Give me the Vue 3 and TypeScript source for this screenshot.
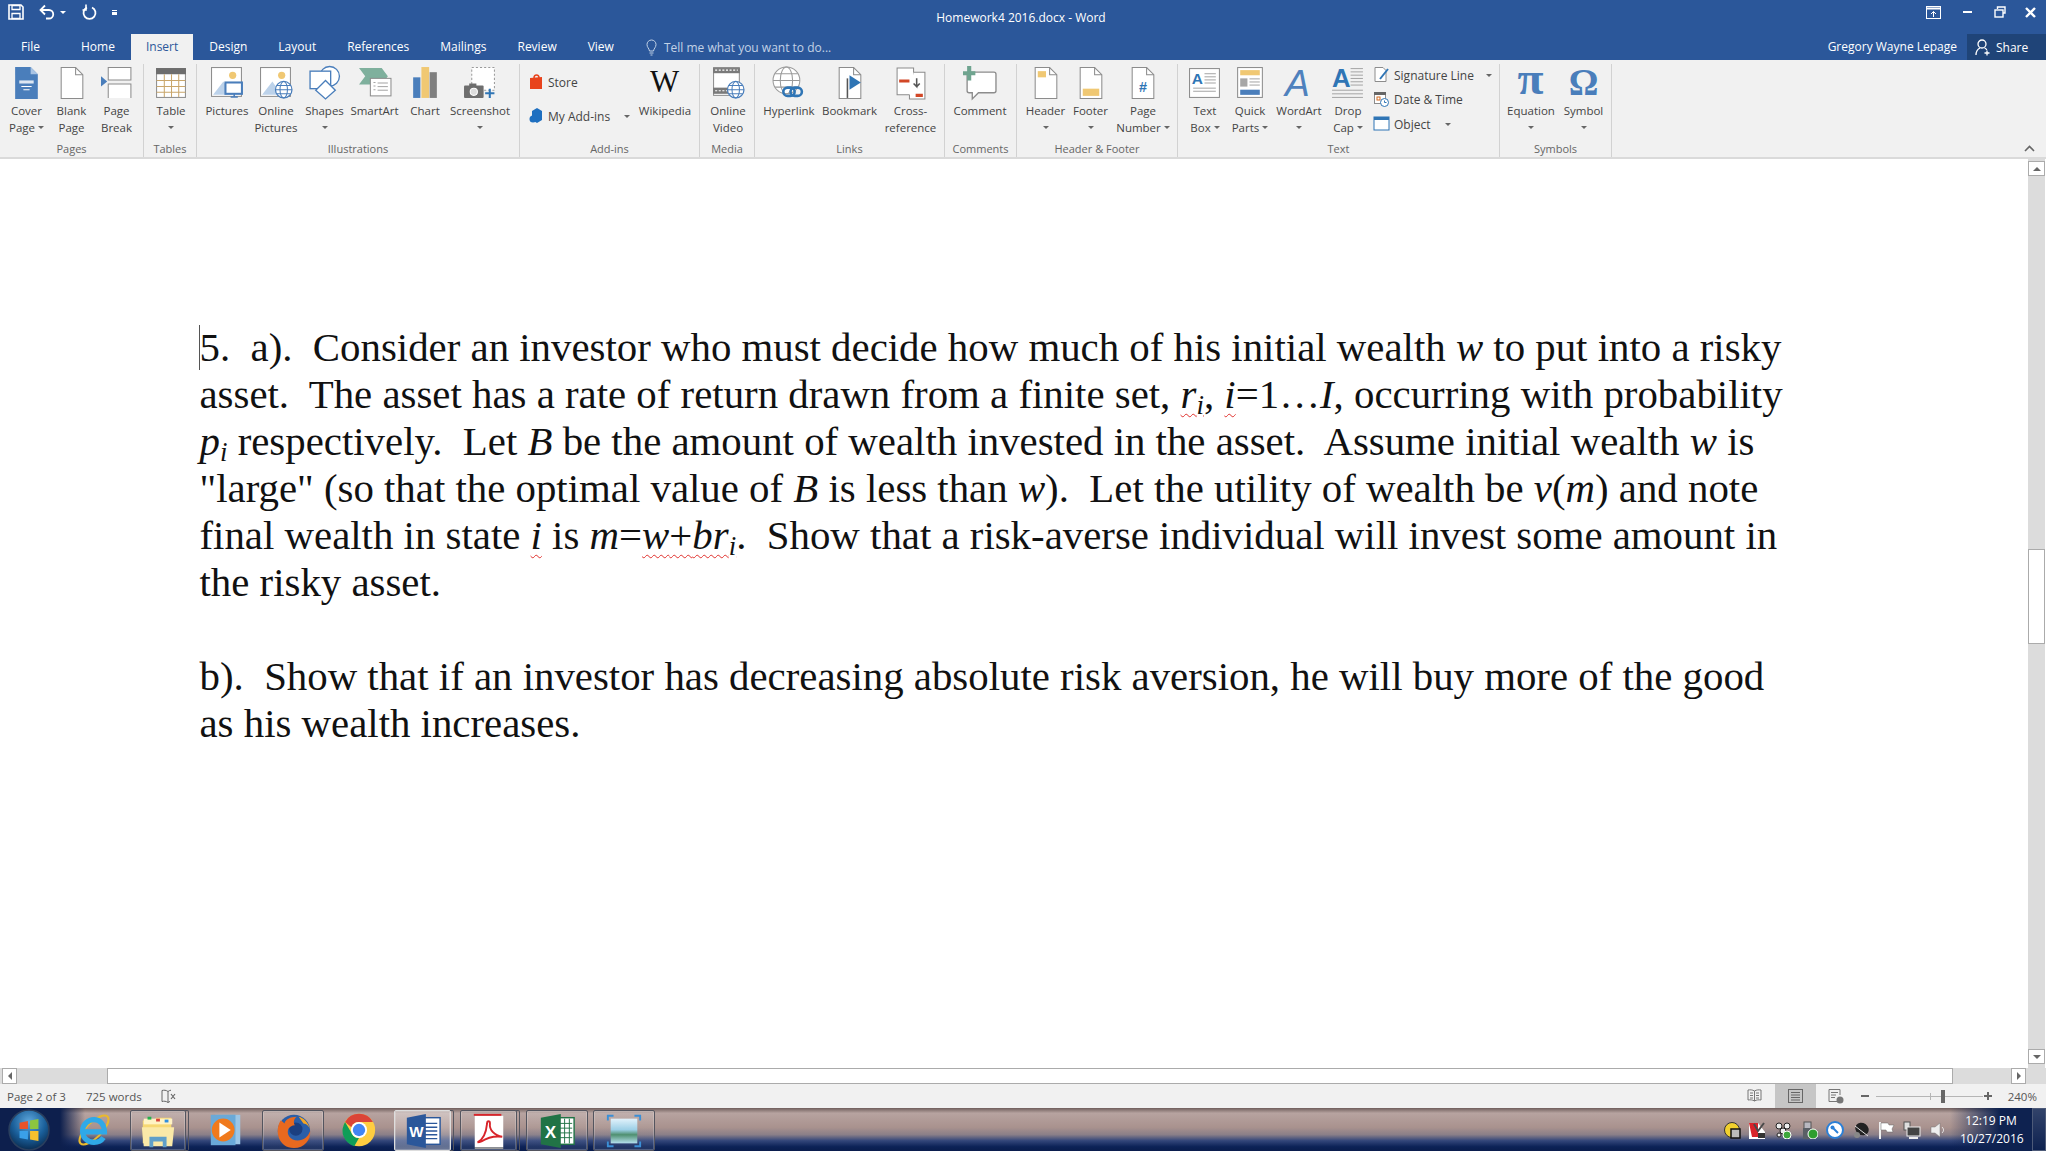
<script setup lang="ts">
type Btn = { icon: string; w: number; lines: string[]; caret?: boolean; size?: number }
type Group = { label: string; w: number; pl: number; items: Btn[]; stack?: string }
type Seg = { t?: string; c?: string; kids?: Seg[] }

const tabs = ['File', 'Home', 'Insert', 'Design', 'Layout', 'References', 'Mailings', 'Review', 'View']

const line = '#8c8c8c'
const blue = '#4a7ebb'
const yellow = '#f0c873'
const globe = (x: number, y: number, r: number) =>
  `<circle cx="${x}" cy="${y}" r="${r}" fill="#fff" stroke="${blue}" stroke-width="1.2"/><ellipse cx="${x}" cy="${y}" rx="${r * 0.45}" ry="${r}" fill="none" stroke="${blue}"/><path d="M${x - r} ${y}h${2 * r}M${x - r * 0.85} ${y - r * 0.5}h${1.7 * r}M${x - r * 0.85} ${y + r * 0.5}h${1.7 * r}" stroke="${blue}" fill="none"/>`
const doc = `<path d="M6 1.5h14l7 7v23H6z" fill="#fff" stroke="${line}"/><path d="M20 1.5v7h7" fill="none" stroke="${line}"/>`
const rows = (x: number, y: number, w: number, n: number, gap = 3) =>
  Array.from({ length: n }, (_, i) => `<path d="M${x} ${y + i * gap + 0.5}h${w}" stroke="#a6a6a6"/>`).join('')

const icons: Record<string, string> = {
  cover: `<path d="M5 1h15l7 7v24H5z" fill="${blue}"/><path d="M20 1v7h7z" fill="#a9c4e4"/><path d="M9 14h14v3H9z" fill="#dce6f2"/><path d="M11 20h10M13 23h6" stroke="#fff"/>`,
  blank: doc,
  pagebreak: `<path d="M8 1.5h22v12H8zM8 31V17.5h22V31" fill="#fff" stroke="${line}"/><path d="M1 10l6 5-6 5z" fill="${blue}"/>`,
  table: `<rect x="2.5" y="2.5" width="28" height="28" fill="#fff" stroke="${line}"/><rect x="2" y="2" width="29" height="6" fill="#6d6d6d"/><path d="M2.5 14h28M2.5 20h28M2.5 25.500h28M10 8v22M17 8v22M24 8v22" stroke="#c9a66b"/>`,
  pictures: `<rect x="1.500" y="1.500" width="29" height="28" fill="#fff" stroke="${line}"/><circle cx="22" cy="9" r="3.500" fill="${yellow}"/><path d="M3 28l10-13 9 13z" fill="#bcd2ea"/><rect x="15" y="16" width="16" height="11" fill="#fff" stroke="${blue}" stroke-width="2"/><path d="M20 30h7M23.500 27v3" stroke="${blue}" stroke-width="1.500"/>`,
  online: `<rect x="1.500" y="1.500" width="29" height="28" fill="#fff" stroke="${line}"/><circle cx="22" cy="9" r="3.500" fill="${yellow}"/><path d="M3 28l10-13 9 13z" fill="#bcd2ea"/>${globe(24, 23, 8)}`,
  shapes: `<circle cx="21" cy="10" r="9.500" fill="#fff" stroke="${blue}" stroke-width="1.300"/><rect x="2" y="5" width="20" height="17" fill="#fff" stroke="${blue}" stroke-width="1.300"/><path d="M17 14l9.500 9.500L17 32l-9.500-8.500z" fill="#fff" stroke="${blue}" stroke-width="1.300"/>`,
  smartart: `<path d="M1 2h22l6 8-6 8H1l6-8z" fill="#7fb09d"/><rect x="12" y="12" width="20" height="17" fill="#fff" stroke="${line}"/>${rows(19, 16, 10, 3, 3.500)}<path d="M15 16h2M15 19.500h2M15 23h2" stroke="#a6a6a6"/>`,
  chart: `<rect x="5" y="11" width="7" height="20" fill="#4a7ebb"/><rect x="13" y="1" width="7.500" height="30" fill="${yellow}"/><rect x="21" y="6" width="7" height="25" fill="#7f7f7f"/>`,
  screenshot: `<rect x="8.500" y="1.500" width="22" height="22" fill="#fff" stroke="#9a9a9a" stroke-dasharray="2 2"/><rect x="1" y="19" width="19" height="12" rx="1" fill="#6e6e6e"/><rect x="6" y="17" width="7" height="3" fill="#6e6e6e"/><circle cx="10.500" cy="25" r="3.500" fill="#ddd" stroke="#fff"/><path d="M26 22v9M21.500 26.500h9" stroke="#2f75b5" stroke-width="2"/>`,
  video: `<rect x="2.500" y="1.500" width="25" height="27" fill="#fff" stroke="${line}"/><rect x="2" y="2" width="26" height="5" fill="#7a7a7a"/><rect x="2" y="21" width="18" height="6" fill="#7a7a7a"/><path d="M4 4h22M4 24h14" stroke="#fff" stroke-dasharray="2 1.500"/>${globe(24, 23, 8)}`,
  hyperlink: `<circle cx="14" cy="14" r="13" fill="#fff" stroke="#9a9a9a"/><ellipse cx="14" cy="14" rx="6" ry="13" fill="none" stroke="#9a9a9a"/><path d="M1 14h26M3 7.500h22M3 20.500h22" stroke="#9a9a9a"/><rect x="11" y="21" width="11" height="8" rx="4" fill="none" stroke="#2f75b5" stroke-width="2.500"/><rect x="18" y="21" width="11" height="8" rx="4" fill="none" stroke="#2f75b5" stroke-width="2.500"/>`,
  bookmark: `${doc}<path d="M14 12v19" stroke="#555" stroke-width="1.500"/><path d="M16 9l11 7-11 7z" fill="#2f75b5"/>`,
  cross: `<path d="M3 2h16v26H3z" fill="#fff" stroke="${line}"/><path d="M19 6h11v26H15v-4" fill="#fff" stroke="${line}"/><path d="M5 13h10v3H5zM21 27h7v3h-7z" fill="#d24726"/><path d="M22 12v8l-3-3m3 3l3-3" fill="none" stroke="#555" stroke-width="1.500"/>`,
  comment: `<path d="M6 6h24a2 2 0 0 1 2 2v16a2 2 0 0 1-2 2H15l-6 6v-6H6a2 2 0 0 1-2-2V8z" fill="#fff" stroke="${line}" stroke-width="1.300"/><path d="M0 7h12M6 0v14" stroke="#6fa48f" stroke-width="4"/>`,
  header: `${doc}<rect x="8.500" y="5" width="8" height="6" fill="${yellow}"/>`,
  footer: `${doc}<rect x="8.500" y="22" width="16" height="7" fill="${yellow}"/>`,
  pagenum: `${doc}<text x="16.500" y="25" text-anchor="middle" class="svgt" font-size="14" font-weight="700" fill="#2f75b5">#</text>`,
  textbox: `<rect x="1.500" y="2.500" width="29" height="28" fill="#fff" stroke="${line}"/><text x="9" y="17" text-anchor="middle" class="svgt" font-size="15" font-weight="700" fill="#2f75b5">A</text>${rows(16, 7, 11, 4)}${rows(5, 21, 22, 2)}`,
  quick: `<rect x="4.500" y="1.500" width="24" height="29" fill="#fff" stroke="${line}"/><rect x="7" y="4" width="19" height="5" fill="${yellow}"/><rect x="7" y="12" width="7" height="8" fill="#a6a6a6"/>${rows(16, 12, 10, 3)}<rect x="7" y="23" width="19" height="5" fill="${blue}"/>`,
  wordart: `<text x="15" y="29" text-anchor="middle" class="svgt" font-size="36" font-style="italic" fill="#4f81bd">A</text>`,
  dropcap: `<text x="10" y="20" text-anchor="middle" class="svgt" font-size="25" font-weight="700" fill="#2f75b5">A</text>${rows(19, 2, 12, 6, 3.200)}${rows(1, 23, 30, 3, 3.500)}`,
  pi: `<text x="16" y="27" text-anchor="middle" class="svgs" font-size="46" font-weight="700" fill="#4a7ebb">π</text>`,
  omega: `<text x="16" y="28" text-anchor="middle" class="svgs" font-size="36" font-weight="700" fill="#4a7ebb">Ω</text>`,
  wiki: `<text x="16" y="25" text-anchor="middle" class="svgs" font-size="30" fill="#111">W</text>`,
  store: `<path d="M2 5l12-1v12H2z" fill="#e8431c"/><path d="M6 5c0-4 5-4 5 0" fill="none" stroke="#e8431c" stroke-width="1.500"/>`,
  addin: `<path d="M8 1l5 3v9l-5 3-5-3V4z" fill="#1e6fc0"/><circle cx="4" cy="12" r="3.500" fill="#1e6fc0"/>`,
  signature: `<path d="M2 1.500h8l3 3v11H2z" fill="#fff" stroke="${line}"/><path d="M7 13l8-10" stroke="#2f75b5" stroke-width="2"/>`,
  datetime: `<rect x="1.500" y="1.500" width="11" height="11" fill="#fff" stroke="${line}"/><rect x="1" y="1" width="12" height="3" fill="#666"/><rect x="4" y="6" width="3" height="3" fill="none" stroke="#d2691e"/><circle cx="11.500" cy="11.500" r="4" fill="#fff" stroke="#2f75b5"/><path d="M11.500 9.500v2h2" stroke="#2f75b5" fill="none"/>`,
  object: `<rect x="1" y="2" width="15" height="13" fill="#fff" stroke="#2f75b5"/><rect x="1" y="2" width="15" height="3" fill="#2f75b5"/>`
}

const groups: Group[] = [
  { label: 'Pages', w: 144, pl: 4, items: [
    { icon: 'cover', w: 45, lines: ['Cover', 'Page'], caret: true },
    { icon: 'blank', w: 45, lines: ['Blank', 'Page'] },
    { icon: 'pagebreak', w: 45, lines: ['Page', 'Break'] }
  ] },
  { label: 'Tables', w: 53, pl: 2, items: [{ icon: 'table', w: 50, lines: ['Table', ''], caret: true }] },
  { label: 'Illustrations', w: 323, pl: 5, items: [
    { icon: 'pictures', w: 50, lines: ['Pictures'] },
    { icon: 'online', w: 48, lines: ['Online', 'Pictures'] },
    { icon: 'shapes', w: 49, lines: ['Shapes', ''], caret: true },
    { icon: 'smartart', w: 51, lines: ['SmartArt'] },
    { icon: 'chart', w: 50, lines: ['Chart'] },
    { icon: 'screenshot', w: 60, lines: ['Screenshot', ''], caret: true }
  ] },
  { label: 'Add-ins', w: 180, pl: 115, stack: 'addins', items: [
    { icon: 'wiki', w: 60, lines: ['Wikipedia'] }
  ] },
  { label: 'Media', w: 55, pl: 3, items: [{ icon: 'video', w: 50, lines: ['Online', 'Video'] }] },
  { label: 'Links', w: 190, pl: 4, items: [
    { icon: 'hyperlink', w: 60, lines: ['Hyperlink'] },
    { icon: 'bookmark', w: 61, lines: ['Bookmark'] },
    { icon: 'cross', w: 61, lines: ['Cross-', 'reference'] }
  ] },
  { label: 'Comments', w: 72, pl: 5, items: [{ icon: 'comment', w: 60, lines: ['Comment'] }] },
  { label: 'Header & Footer', w: 161, pl: 6, items: [
    { icon: 'header', w: 45, lines: ['Header', ''], caret: true },
    { icon: 'footer', w: 45, lines: ['Footer', ''], caret: true },
    { icon: 'pagenum', w: 60, lines: ['Page', 'Number'], caret: true }
  ] },
  { label: 'Text', w: 322, pl: 4, stack: 'text', items: [
    { icon: 'textbox', w: 46, lines: ['Text', 'Box'], caret: true },
    { icon: 'quick', w: 44, lines: ['Quick', 'Parts'], caret: true },
    { icon: 'wordart', w: 54, lines: ['WordArt', ''], caret: true },
    { icon: 'dropcap', w: 44, lines: ['Drop', 'Cap'], caret: true }
  ] },
  { label: 'Symbols', w: 112, pl: 5, items: [
    { icon: 'pi', w: 52, lines: ['Equation', ''], caret: true },
    { icon: 'omega', w: 53, lines: ['Symbol', ''], caret: true }
  ] }
]

const textStack = [
  { icon: 'signature', text: 'Signature Line', arrow: 9 },
  { icon: 'datetime', text: 'Date & Time', arrow: 0 },
  { icon: 'object', text: 'Object', arrow: 12 }
]

const it = (t: string): Seg => ({ t, c: 'it' })
const sub = (t: string): Seg => ({ t, c: 'it sub' })
const txt = (t: string): Seg => ({ t })

const page: Seg[][] = [
  [txt('5.  a).  Consider an investor who must decide how much of his initial wealth '), it('w'), txt(' to put into a risky')],
  [txt('asset.  The asset has a rate of return drawn from a finite set, '), { c: 'err', kids: [it('r'), sub('i')] }, txt(', '), { c: 'err', kids: [it('i')] }, txt('=1…'), it('I'), txt(', occurring with probability')],
  [it('p'), sub('i'), txt(' respectively.  Let '), it('B'), txt(' be the amount of wealth invested in the asset.  Assume initial wealth '), it('w'), txt(' is')],
  [txt('"large" (so that the optimal value of '), it('B'), txt(' is less than '), it('w'), txt(').  Let the utility of wealth be '), it('v'), txt('('), it('m'), txt(') and note')],
  [txt('final wealth in state '), { c: 'err', kids: [it('i')] }, txt(' is '), it('m'), txt('='), { c: 'err', kids: [it('w'), txt('+'), it('br'), sub('i')] }, txt('.  Show that a risk-averse individual will invest some amount in')],
  [txt('the risky asset.')],
  [txt(' ')],
  [txt('b).  Show that if an investor has decreasing absolute risk aversion, he will buy more of the good')],
  [txt('as his wealth increases.')]
]

const task: Record<string, string> = {
  orb: `<defs><radialGradient id="orbg" cx="50%" cy="30%" r="75%"><stop offset="0" stop-color="#5fa8dc"/><stop offset="0.55" stop-color="#1a5f9a"/><stop offset="1" stop-color="#072446"/></radialGradient></defs><circle cx="20" cy="20" r="19" fill="url(#orbg)" stroke="#2a3f5e" stroke-width="1.500"/><path d="M11 13l8-1.500v7.500h-8z" fill="#e8532b"/><path d="M21 11l8-1.500v9.500h-8z" fill="#8cc63f"/><path d="M11 21h8v8l-8-1.500z" fill="#3aa0e8"/><path d="M21 21h8v9.500l-8-1.500z" fill="#f6c12c"/>`,
  ie: `<ellipse cx="20" cy="20" rx="20" ry="8" transform="rotate(-45 20 20)" fill="none" stroke="#eab92c" stroke-width="2.200"/><path d="M8 22h23c0-8-5-13-11-13S8 14 8 21s5 12 12 12c4 0 8-2 10-5" fill="none" stroke="#2fa9e8" stroke-width="5.500"/>`,
  explorer: `<path d="M4 9h12l2-3h16v27H4z" fill="#f7d873"/><path d="M5 7h30v6H5z" fill="#fff3c4"/><rect x="9" y="5" width="4" height="3" fill="#26b14c"/><rect x="18" y="7" width="4" height="3" fill="#d8433a"/><rect x="27" y="8" width="4" height="3" fill="#2f8fe0"/><path d="M3 16h34l-2 20H5z" fill="#fae9a8"/><path d="M11 37V26h18v11h-4v-6H15v6z" fill="#5f9fc9"/>`,
  media: `<rect x="9" y="4" width="26" height="31" fill="#9cc6e6"/><rect x="4" y="4" width="26" height="32" fill="#6aa9d8"/><circle cx="17" cy="20" r="12" fill="#f07a1d"/><path d="M13 12l12 8-12 8z" fill="#fff"/>`,
  firefox: `<circle cx="21" cy="20" r="17" fill="#2a5ea8"/><circle cx="23" cy="18" r="7" fill="#1b3f80"/><path d="M7 9C0 20 5 38 21 38c11 0 18-9 17-18-2 6-7 10-13 10-8 0-12-6-10-12 1-2 4-4 7-4-2-3-1-7 2-9-7 0-12 3-13 7-1-1-2-2-4-3z" fill="#e8691f"/><path d="M26 5c5 1 10 6 12 13-1-3-4-6-7-6z" fill="#f6a623"/>`,
  chrome: `<circle cx="20" cy="20" r="17" fill="#ffcd40"/><path d="M20 3a17 17 0 0 1 14.700 8.500H20a8.500 8.500 0 0 0-8 5.500L5.300 11.500A17 17 0 0 1 20 3z" fill="#db4437"/><path d="M5.300 11.500L12 23a8.500 8.500 0 0 0 8 5.500L15 37A17 17 0 0 1 5.300 11.500z" fill="#0f9d58"/><circle cx="20" cy="20" r="8.500" fill="#fff"/><circle cx="20" cy="20" r="6.500" fill="#4285f4"/>`,
  word: `<rect x="17" y="6" width="21" height="28" fill="#fff" stroke="#2b579a" stroke-width="1.500"/><path d="M22 12h13M22 16h13M22 20h13M22 24h13M22 28h13" stroke="#2b579a" stroke-width="1.500"/><path d="M3 6l20-4v36L3 34z" fill="#2b579a"/><text x="13" y="26" text-anchor="middle" class="svgt" font-size="16" font-weight="700" fill="#fff">W</text>`,
  acrobat: `<rect x="5" y="4" width="30" height="33" fill="#fff"/><rect x="5" y="37" width="30" height="2" fill="#9a9a9a"/><rect x="4" y="2" width="29" height="2" fill="#d8242a"/><path d="M8 32c6-3 9-10 10-20 0-3 3-3 3 0-1 7 5 13 13 14-8-1-16 1-22 5-2 1-4 1-4 1z" fill="none" stroke="#d8242a" stroke-width="2"/>`,
  excel: `<rect x="18" y="6" width="20" height="28" fill="#fff" stroke="#217346" stroke-width="1.500"/><path d="M22 12h14M22 17h14M22 22h14M22 27h14M28 7v26M33 7v26" stroke="#217346"/><path d="M3 6l21-4v36L3 34z" fill="#217346"/><text x="13" y="27" text-anchor="middle" class="svgt" font-size="18" font-weight="700" fill="#fff">X</text>`,
  photo: `<defs><linearGradient id="ph" x1="0" y1="0" x2="0" y2="1"><stop offset="0" stop-color="#e2f2fb"/><stop offset="0.45" stop-color="#9ccfe6"/><stop offset="0.65" stop-color="#4f9070"/><stop offset="1" stop-color="#b5e0ef"/></linearGradient></defs><rect x="6" y="7" width="28" height="26" fill="url(#ph)"/><path d="M2 9V3h7v2H4v4zM38 9V3h-7v2h5v4zM2 31v6h7v-2H4v-4zM38 31v6h-7v-2h5v-4z" fill="#3b8fd6"/>`
}

const taskItems = [
  { icon: 'ie', w: 72, m: 0, btn: false },
  { icon: 'explorer', w: 56, m: 0, btn: true, sliver: true },
  { icon: 'media', w: 72, m: 0, btn: false },
  { icon: 'firefox', w: 62, m: 0, btn: true },
  { icon: 'chrome', w: 70, m: 0, btn: false },
  { icon: 'word', w: 57, m: 0, btn: true, sliver: true, active: true },
  { icon: 'acrobat', w: 57, m: 5, btn: true, sliver: true },
  { icon: 'excel', w: 62, m: 5, btn: true },
  { icon: 'photo', w: 62, m: 5, btn: true }
]

const tray: Record<string, string> = {
  a: `<circle cx="9" cy="9" r="7.500" fill="#f2d02e" stroke="#333"/><rect x="8" y="8" width="9" height="9" fill="#bbb" stroke="#111" stroke-width="1.500"/>`,
  b: `<path d="M1 2h9l7 9v7H1z" fill="#fff"/><path d="M1 2h9v14H4z" fill="#d8242a"/><path d="M6 3l4 7 6-8" stroke="#4a4a4a" stroke-width="2" fill="none"/><rect x="10" y="12" width="7" height="5" fill="#333"/>`,
  c: `<circle cx="5" cy="5" r="3" fill="#eee" stroke="#222"/><circle cx="13" cy="5" r="3" fill="#eee" stroke="#222"/><circle cx="9" cy="10" r="3" fill="#eee" stroke="#222"/><circle cx="5" cy="14" r="2" fill="#eee" stroke="#222"/><circle cx="13" cy="14" r="4" fill="#3da83c" stroke="#fff"/>`,
  d: `<rect x="4" y="1" width="7" height="7" fill="#b8b8c0" stroke="#555"/><rect x="3" y="7" width="9" height="11" fill="#5a5f66"/><circle cx="13" cy="13" r="5" fill="#2f9e2f" stroke="#fff"/>`,
  e: `<circle cx="9" cy="9" r="8" fill="#fff" stroke="#2a7fd6" stroke-width="2"/><path d="M6 6l6 6" stroke="#2a7fd6" stroke-width="2"/><circle cx="6.500" cy="6.500" r="2" fill="#2a7fd6"/>`,
  f: `<ellipse cx="10" cy="8" rx="7" ry="6" transform="rotate(35 10 8)" fill="#222"/><path d="M3 5l13 10" stroke="#ddd"/><circle cx="5" cy="14" r="3" fill="#888"/>`,
  g: `<path d="M3 1v17" stroke="#eee" stroke-width="2"/><path d="M4 2h7l1 2h5l-2 4 1 3h-6l-1-2H4z" fill="#fff" stroke="#666" stroke-width="0.500"/>`,
  h: `<rect x="1" y="1" width="6" height="8" fill="#ddd" stroke="#555"/><rect x="4" y="6" width="13" height="9" fill="#444" stroke="#eee"/><path d="M6 17h9" stroke="#eee" stroke-width="2"/>`,
  i: `<path d="M2 6h4l5-4v14l-5-4H2z" fill="#eee" stroke="#777" stroke-width="0.500"/><path d="M13 6c2 2 2 4 0 6" stroke="#eee" fill="none"/>`
}
</script>

<template>
  <div class="word">
    <header class="top">
      <div class="titlerow">
        <div class="qat">
          <svg class="qsave" width="16" height="16" viewBox="0 0 16 16"><path d="M1 1h12l2 2v12H1z" fill="none" stroke="#fff" stroke-width="1.600"/><path d="M4 1.500h8v4H4zM4 9.500h8v5H4z" fill="none" stroke="#fff" stroke-width="1.300"/></svg>
          <svg class="qundo" width="16" height="16" viewBox="0 0 16 16"><path d="M2 6h8a4.200 4.200 0 0 1 0 8.500H7" fill="none" stroke="#fff" stroke-width="1.800"/><path d="M6 1.500L1.500 6 6 10.500" fill="none" stroke="#fff" stroke-width="1.800"/></svg>
          <span class="qcaret"></span>
          <svg class="qredo" width="15" height="16" viewBox="0 0 15 16"><path d="M5 3.500a6 6 0 1 0 5 0" fill="none" stroke="#fff" stroke-width="1.800"/><path d="M4 0.500v5.500h-3.500" fill="none" stroke="#fff" stroke-width="1.600"/></svg>
          <span class="qmore"></span>
        </div>
        <div class="title">Homework4 2016.docx - Word</div>
        <div class="win">
          <svg width="15" height="13" viewBox="0 0 15 13"><rect x="0.500" y="0.500" width="14" height="12" fill="none" stroke="#fff"/><path d="M1 2.500h13" stroke="#fff" stroke-width="2"/><path d="M7.500 11V5.500M5 8l2.500-2.500L10 8" fill="none" stroke="#fff"/></svg>
          <span class="wmin"></span>
          <svg width="12" height="12" viewBox="0 0 12 12"><path d="M3.500 3V1h7.500v6H9" fill="none" stroke="#fff" stroke-width="1.400"/><rect x="1" y="4" width="8" height="7" fill="none" stroke="#fff" stroke-width="1.400"/></svg>
          <svg width="11" height="11" viewBox="0 0 11 11"><path d="M1 1l9 9M10 1l-9 9" stroke="#fff" stroke-width="2.400"/></svg>
        </div>
      </div>
      <div class="tabrow">
        <nav class="tabs">
          <span v-for="t in tabs" :key="t" class="tab" :class="{ on: t === 'Insert', file: t === 'File' }">{{ t }}</span>
        </nav>
        <div class="tell">
          <svg width="11" height="17" viewBox="0 0 11 17"><path d="M3.500 12C3 9 1 8.500 1 5.500a4.500 4.500 0 0 1 9 0C10 8.500 8 9 7.500 12z" fill="none" stroke="#c2d2e6"/><path d="M3.500 14h4M4.500 16h2" stroke="#c2d2e6"/></svg>
          <span>Tell me what you want to do...</span>
        </div>
        <div class="user">Gregory Wayne Lepage</div>
        <div class="share">
          <svg width="16" height="17" viewBox="0 0 16 17"><circle cx="7" cy="5" r="4" fill="none" stroke="#fff" stroke-width="1.300"/><path d="M1 16c0-4 2-6 4-7M9.500 9c1 .3 1.800 1 2.300 2" fill="none" stroke="#fff" stroke-width="1.300"/><path d="M12 11.500v5M9.500 14h5" stroke="#fff" stroke-width="1.300"/></svg>
          <span>Share</span>
        </div>
      </div>
    </header>

    <section class="ribbon">
      <div v-for="g in groups" :key="g.label" class="group" :style="{ width: g.w + 'px' }">
        <div class="gitems" :style="{ paddingLeft: g.pl + 'px' }">
          <div v-if="g.stack === 'addins'" class="addins">
            <div class="mini"><svg width="18" height="18" viewBox="0 0 18 18" v-html="icons.store"></svg><span>Store</span></div>
            <div class="mini"><svg width="18" height="18" viewBox="0 0 16 18" v-html="icons.addin"></svg><span>My Add-ins</span><i class="caret ar"></i></div>
          </div>
          <div v-for="b in g.items" :key="b.icon" class="btn" :style="{ width: b.w + 'px' }">
            <svg class="bicon" width="34" height="34" viewBox="0 0 33 33" v-html="icons[b.icon]"></svg>
            <div v-for="(l, n) in b.lines" :key="n" class="lbl">{{ l }}<i v-if="b.caret && n === b.lines.length - 1" class="caret" :class="{ sp: l }"></i></div>
          </div>
          <div v-if="g.stack === 'text'" class="tstack">
            <div v-for="s in textStack" :key="s.icon" class="mini">
              <svg width="18" height="18" viewBox="0 0 18 18" v-html="icons[s.icon]"></svg>
              <span>{{ s.text }}</span>
              <i v-if="s.arrow" class="caret" :style="{ marginLeft: s.arrow + 'px' }"></i>
            </div>
          </div>
        </div>
        <div class="glabel">{{ g.label }}</div>
      </div>
      <svg class="collapse" width="11" height="7" viewBox="0 0 11 7"><path d="M1 6l4.500-4.500L10 6" fill="none" stroke="#666" stroke-width="1.600"/></svg>
    </section>

    <main class="docwrap">
      <div class="doc">
        <span class="cursor"></span>
        <div v-for="(ln, n) in page" :key="n" class="ln">
          <span v-for="(s, k) in ln" :key="k" :class="s.c"><template v-if="s.kids"><span v-for="(c, j) in s.kids" :key="j" :class="c.c">{{ c.t }}</span></template><template v-else>{{ s.t }}</template></span>
        </div>
      </div>
      <aside class="vbar">
        <div class="vbtn"><i class="tri up"></i></div>
        <div class="vthumb"></div>
        <div class="vbtn end"><i class="tri down"></i></div>
      </aside>
    </main>

    <div class="hbar">
      <div class="hbtn"><i class="tri left"></i></div>
      <div class="hthumb"></div>
      <div class="hbtn rt"><i class="tri right"></i></div>
    </div>

    <footer class="status">
      <span class="st1">Page 2 of 3</span>
      <span class="st2">725 words</span>
      <svg class="st3" width="15" height="15" viewBox="0 0 15 15"><path d="M7 2.500C5 1 3 1 1 1.500v11c2-.5 4-.5 6 1zM7 2.500c1-.8 2-1.200 3-1.300M7 13.500c.7-.5 1.400-.8 2-1" fill="none" stroke="#666"/><path d="M10 5l4 5M14 5l-4 5" stroke="#666" stroke-width="1.200"/></svg>
      <div class="views">
        <svg class="v1" width="15" height="14" viewBox="0 0 15 14"><path d="M7.500 2C5.500.7 3 .7 1 1v10c2-.3 4.500-.3 6.500 1 2-1.300 4.500-1.300 6.500-1V1c-2-.3-4.500-.3-6.500 1zM7.500 2v10M3 4h3M3 6.500h3M3 9h3M9 4h3M9 6.500h3M9 9h3" fill="none" stroke="#777"/></svg>
        <div class="v2"><svg width="15" height="14" viewBox="0 0 15 14"><rect x="0.500" y="0.500" width="14" height="13" fill="none" stroke="#666"/><path d="M3 3.500h9M3 6h9M3 8.500h9M3 11h9" stroke="#666"/></svg></div>
        <svg class="v3" width="16" height="15" viewBox="0 0 16 15"><path d="M9 12.500H1V.5h11v5.500" fill="none" stroke="#777"/><path d="M3 3.500h7M3 6h5M3 8.500h4" stroke="#777"/><circle cx="12" cy="11" r="3.500" fill="#777"/></svg>
      </div>
      <span class="zbtn minus"></span>
      <div class="slider"><span class="tick"></span><span class="thumb"></span></div>
      <span class="zbtn plus"></span>
      <span class="pct">240%</span>
    </footer>

    <div class="taskbar">
      <div class="orb"><svg width="42" height="42" viewBox="0 0 40 40" v-html="task.orb"></svg></div>
      <div
        v-for="t in taskItems"
        :key="t.icon"
        class="titem"
        :class="{ tbtn: t.btn, tact: t.active }"
        :style="{ width: t.w + 'px', marginLeft: t.m + 'px' }"
      >
        <svg width="38" height="38" viewBox="0 0 40 40" v-html="task[t.icon]"></svg>
        <span v-if="t.sliver" class="sliver"></span>
      </div>
      <div class="tray">
        <svg v-for="(p, k) in tray" :key="k" width="18" height="18" viewBox="0 0 18 18" v-html="p"></svg>
      </div>
      <div class="clock"><div>12:19 PM</div><div>10/27/2016</div></div>
      <div class="desk"></div>
    </div>
  </div>
</template>

<style>
html, body { margin: 0; overflow: hidden; background: #fff; }
.svgt { font-family: "Liberation Sans", sans-serif; }
.svgs { font-family: "Liberation Serif", serif; }
</style>

<style scoped>
.word {
  width: 2046px;
  height: 1151px;
  display: flex;
  flex-direction: column;
  font-family: "Open Sans", "Noto Sans", sans-serif;
  font-size: 11.5px;
  color: #444;
  overflow: hidden;
}
.top { height: 60px; background: #2b579a; color: #fff; flex: none; font-size: 12px; }
.titlerow { height: 34px; display: grid; grid-template-columns: 1fr auto 1fr; align-items: start; }
.qat { display: flex; align-items: center; height: 24px; padding-left: 8px; }
.qundo { margin-left: 15px; }
.qcaret { border: 3px solid transparent; border-top-color: #fff; border-bottom: 0; margin-left: 5px; }
.qredo { margin-left: 16px; }
.qmore { width: 5px; height: 5px; margin-left: 15px; border-top: 1px solid #fff; border-bottom: 3px solid #fff; box-sizing: border-box; }
.title { margin-top: 8px; font-size: 12px; line-height: 20px; margin-right: 4px; }
.win { display: flex; align-items: center; justify-content: flex-end; height: 24px; gap: 19px; padding-right: 10px; }
.wmin { width: 9px; height: 2px; background: #fff; margin-left: 3px; margin-right: 3px; }
.tabrow { height: 26px; display: flex; align-items: stretch; }
.tabs { display: flex; gap: 1px; }
.tab { padding: 0 15px; line-height: 26px; }
.tab.file { padding-left: 21px; padding-right: 25px; }
.tab.on { background: #f1f1f1; color: #2b579a; }
.tell { display: flex; align-items: center; gap: 7px; margin-left: 17px; color: #c2d2e6; }
.user { margin-left: auto; line-height: 26px; padding-right: 10px; }
.share { width: 79px; box-sizing: border-box; background: #1f4478; display: flex; align-items: center; gap: 5px; padding-left: 8px; }

.ribbon {
  position: relative;
  flex: none;
  height: 99px;
  box-sizing: border-box;
  background: #f1f1f1;
  border-bottom: 2px solid #dadada;
  display: flex;
}
.group { position: relative; height: 93px; margin-top: 4px; box-sizing: border-box; border-right: 1px solid #d2d2d2; display: flex; flex-direction: column; }
.gitems { display: flex; height: 77px; }
.btn { display: flex; flex-direction: column; align-items: center; flex: none; }
.bicon { margin-top: 2px; margin-bottom: 2px; flex: none; overflow: visible; }
.lbl { line-height: 17px; height: 17px; white-space: nowrap; display: flex; align-items: center; }
.glabel { text-align: center; font-size: 11px; line-height: 15px; color: #666; }
.caret { display: inline-block; border: 3px solid transparent; border-top-color: #666; border-bottom: 0; }
.caret.sp { margin-left: 3px; }
.addins { position: absolute; left: 8px; top: 1px; display: flex; flex-direction: column; font-size: 12px; }
.addins .mini { height: 34px; gap: 2px; }
.mini { display: flex; align-items: center; gap: 3px; white-space: nowrap; height: 25px; }
.caret.ar { margin-left: 12px; }
.tstack { margin-left: 3px; margin-top: -1px; display: flex; flex-direction: column; width: 125px; font-size: 12px; }
.tstack .mini { height: 24.500px; }
.collapse { position: absolute; right: 11px; bottom: 5px; }

.docwrap { flex: 1; min-height: 0; display: flex; background: #fff; }
.doc { position: relative; flex: 1; padding: 165px 0 0 199.500px; font-family: "Liberation Serif", "Times New Roman", serif; font-size: 40.850px; color: #111; }
.ln { height: 47px; line-height: 47px; white-space: pre; }
.it { font-style: italic; }
.sub { font-size: 27px; vertical-align: -6px; line-height: 0; }
.err { text-decoration: underline wavy #e0302c 1px; text-underline-offset: 5px; }
.cursor { position: absolute; left: 199px; top: 166px; width: 1px; height: 45px; background: #555; }
.vbar { width: 17px; margin-right: 1px; background: #dcdcdc; display: flex; flex-direction: column; }
.vbtn { height: 15px; margin-top: 2px; background: #fff; border: 1px solid #ababab; box-sizing: border-box; display: flex; align-items: center; justify-content: center; flex: none; }
.vbtn.end { margin-top: auto; margin-bottom: 4px; }
.vthumb { height: 95px; margin-top: 373px; background: #fff; border: 1px solid #ababab; box-sizing: border-box; flex: none; }
.tri { display: block; width: 0; height: 0; border: 4px solid transparent; }
.tri.up { border-bottom-color: #666; border-top: 0; }
.tri.down { border-top-color: #666; border-bottom: 0; }
.tri.left { border-right-color: #666; border-left: 0; }
.tri.right { border-left-color: #666; border-right: 0; }

.hbar { flex: none; height: 16px; background: #dcdcdc; display: flex; padding-left: 2px; padding-right: 20px; }
.hbtn { width: 15px; background: #fff; border: 1px solid #ababab; box-sizing: border-box; display: flex; align-items: center; justify-content: center; }
.hthumb { width: 1847px; margin-left: 90px; margin-right: 58px; background: #fff; border: 1px solid #ababab; box-sizing: border-box; }

.status { flex: none; height: 24px; background: #f1f1f1; display: flex; align-items: center; color: #555; font-size: 11.500px; }
.st1 { margin-left: 7px; }
.st2 { margin-left: 20px; }
.st3 { margin-left: 19px; }
.views { display: flex; align-items: center; margin-left: 1571px; height: 24px; }
.v1 { margin-right: 13px; }
.v2 { width: 41px; height: 24px; background: #c6c6c6; display: flex; align-items: center; justify-content: center; }
.v3 { margin-left: 12px; }
.zbtn { position: relative; width: 8px; height: 2px; background: #666; margin-left: 17px; }
.plus { margin-left: 1px; }
.plus::after { content: ""; position: absolute; left: 3px; top: -3px; width: 2px; height: 8px; background: #666; }
.slider { position: relative; width: 107px; height: 1px; background: #b5b5b5; margin-left: 7px; }
.tick { position: absolute; left: 54px; top: -3px; width: 1px; height: 7px; background: #b5b5b5; }
.thumb { position: absolute; left: 65px; top: -6px; width: 4px; height: 13px; background: #666; }
.pct { margin-left: 16px; }

.taskbar {
  flex: none;
  height: 43px;
  display: flex;
  align-items: stretch;
  background:
    linear-gradient(90deg, #0d1f4d 0, #0d1f4d 60px, transparent 85px, transparent 1950px, #0e2250 2000px),
    linear-gradient(180deg, #6f5e5c 0, #b7a3a0 12%, #a9928e 45%, #8a7f88 62%, #33467a 76%, #0c2257 90%, #0a1d4d 100%);
  color: #fff;
}
.orb { width: 58px; display: flex; align-items: center; justify-content: center; }
.titem { position: relative; flex: none; box-sizing: border-box; display: flex; align-items: center; justify-content: center; }
.tbtn { margin-top: 2px; border: 1px solid #54555f; border-radius: 2px; background: linear-gradient(180deg, rgba(255, 255, 255, 0.14), rgba(255, 255, 255, 0.03) 60%, rgba(255, 255, 255, 0.1)); box-shadow: inset 0 0 0 1px rgba(255, 255, 255, 0.2); }
.tact { background: linear-gradient(180deg, rgba(255, 255, 255, 0.35), rgba(255, 255, 255, 0.18) 60%, rgba(255, 255, 255, 0.4)); border-color: #ddd; }
.sliver { position: absolute; left: 100%; top: -1px; bottom: -1px; width: 3px; border: 1px solid #54555f; border-left: 0; border-radius: 0 2px 2px 0; }
.titem:has(.sliver) { margin-right: 4px; }
.tray { margin-left: auto; display: flex; align-items: center; gap: 7.800px; padding-right: 13px; }
.clock { width: 62px; margin-right: 5px; text-align: center; font-size: 12px; line-height: 18px; padding-top: 4px; }
.desk { width: 14px; margin-left: 5px; border: 1px solid #4d5a78; box-sizing: border-box; background: linear-gradient(180deg, rgba(255, 255, 255, 0.15), transparent); }
</style>
